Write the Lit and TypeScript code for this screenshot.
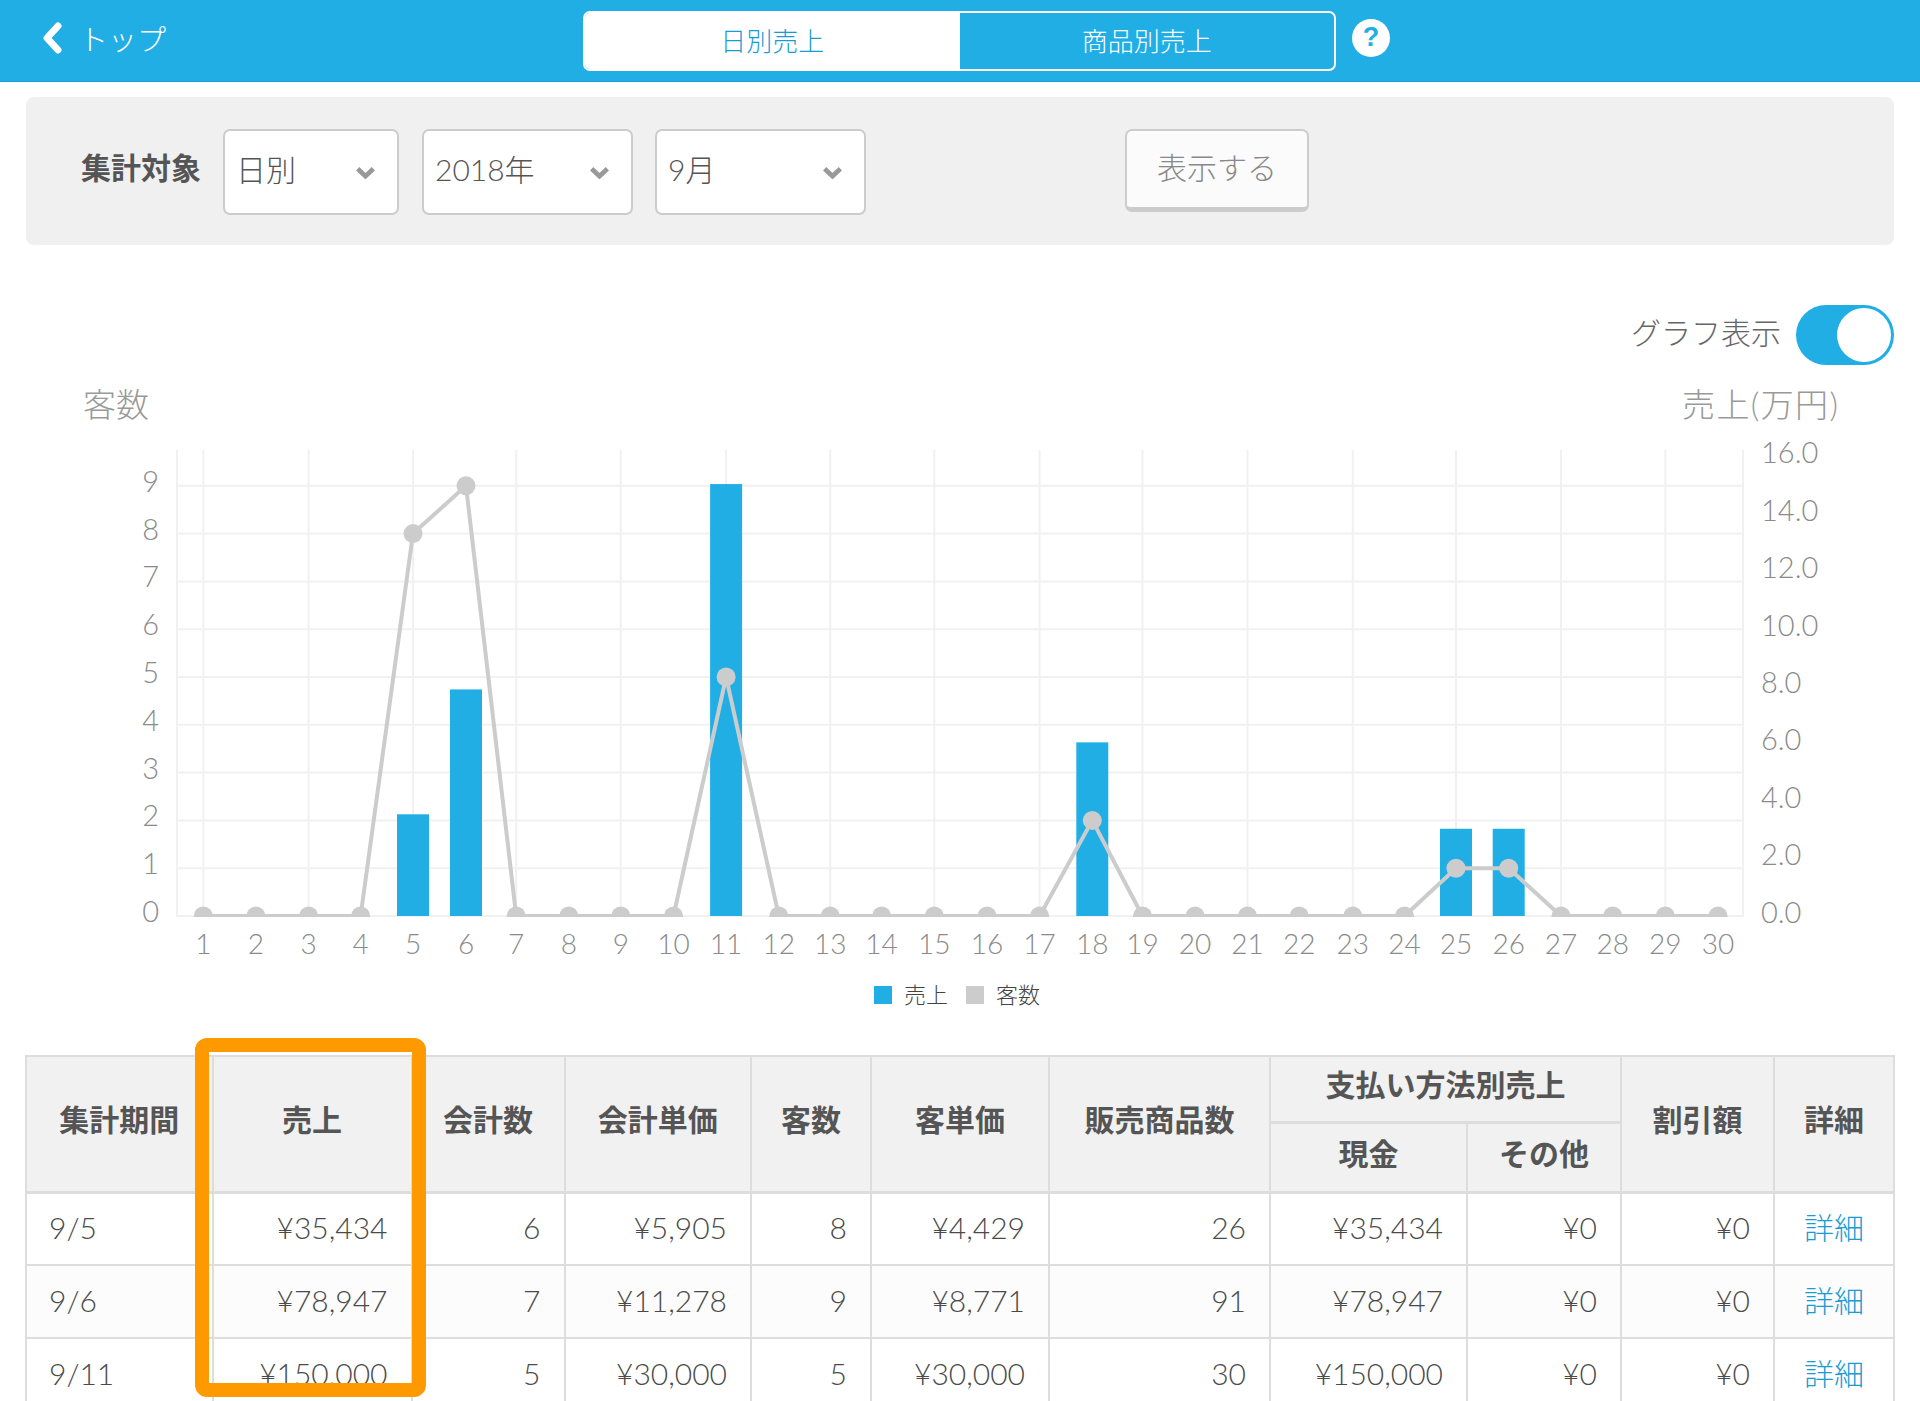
import { LitElement, html, css, svg } from "lit";
import { customElement } from "lit/decorators.js";

const Y0 = 916;
const UNIT = 47.8;
const SALES_UNIT = 28.7;
const dayXs = [
  203.3, 255.9, 308.6, 360.6, 413, 466, 516.2, 568.8, 620.8, 673.5, 726.1, 778.8, 830.2, 881.6, 934.3, 987, 1039.6, 1092.3,
  1142.5, 1195.1, 1247.5, 1299.2, 1352.8, 1404.5, 1456, 1508.7, 1561, 1612.7, 1665.3, 1718,
];
const dayX = (d: number) => dayXs[d - 1];
const days = Array.from({ length: 30 }, (_, i) => i + 1);
const counts: Record<number, number> = { 5: 8, 6: 9, 11: 5, 18: 2, 25: 1, 26: 1 };
const sales: Record<number, number> = { 5: 3.5434, 6: 7.8947, 11: 15.05, 18: 6.05, 25: 3.04, 26: 3.04 };

const rows = [
  ["9/5", "¥35,434", "6", "¥5,905", "8", "¥4,429", "26", "¥35,434", "¥0", "¥0"],
  ["9/6", "¥78,947", "7", "¥11,278", "9", "¥8,771", "91", "¥78,947", "¥0", "¥0"],
  ["9/11", "¥150,000", "5", "¥30,000", "5", "¥30,000", "30", "¥150,000", "¥0", "¥0"],
];
const colWidths = [186.5, 199, 153, 186.5, 120, 178, 221, 197, 154, 153, 120];

const chevron = html`<svg class="chev" viewBox="0 0 20 12"><polyline points="2.5,2.5 10,9.5 17.5,2.5"></polyline></svg>`;

@customElement("app-root")
export class AppRoot extends LitElement {
  static styles = css`
    :host {
      display: block;
      position: relative;
      width: 1920px;
      height: 1401px;
      overflow: hidden;
      background: #fff;
      color: #555;
      font-family: Lato, "Noto Sans CJK JP", sans-serif;
      font-weight: 300;
    }
    .header {
      height: 81px;
      background: #20aee5;
      border-bottom: 1px solid #1a9fd8;
      display: flex;
      align-items: center;
      position: relative;
    }
    .back {
      display: flex;
      align-items: center;
      gap: 15px;
      margin: -5px 0 0 42px;
      color: #fff;
      font-size: 29px;
      width: 500px;
    }
    .back svg { width: 22px; height: 32px; }
    .back polyline { fill: none; stroke: #fff; stroke-width: 7; stroke-linecap: round; stroke-linejoin: round; }
    .tabs {
      margin-left: 41px;
      width: 753px;
      height: 60px;
      box-sizing: border-box;
      border: 2px solid #fff;
      border-radius: 7px;
      display: flex;
      overflow: hidden;
      font-size: 26px;
    }
    .tab { flex: 1; display: flex; align-items: center; justify-content: center; color: #fff; padding-bottom: 3px; }
    .tab.active { background: #fff; color: #1a9bd3; }
    .help {
      width: 38px;
      height: 38px;
      margin-left: 16px;
      margin-top: -6px;
      border-radius: 50%;
      background: #fff;
      color: #20aee5;
      display: flex;
      align-items: center;
      justify-content: center;
      font: 700 27px "Liberation Sans", sans-serif;
    }
    .panel {
      margin: 15px 26px 0;
      height: 148px;
      box-sizing: border-box;
      padding: 32px 0 0 55px;
      background: #f0f0f0;
      border-radius: 8px;
      display: flex;
      align-items: flex-start;
    }
    .panel-label {
      font-size: 30px;
      font-weight: 700;
      width: 120px;
      margin: 16px 22px 0 0;
      line-height: 44px;
      white-space: nowrap;
    }
    .select {
      height: 86px;
      box-sizing: border-box;
      background: #fff;
      border: 2px solid #ccc;
      border-radius: 7px;
      margin-right: 23px;
      padding: 0 21px 0 11px;
      display: flex;
      align-items: center;
      justify-content: space-between;
      font-size: 30px;
      color: #555;
    }
    .select span { padding-bottom: 9px; }
    .select.w1 { width: 176px; }
    .select.w2 { width: 211px; margin-right: 22px; }
    .chev { width: 21px; height: 13px; }
    .chev polyline { fill: none; stroke: #999; stroke-width: 4.5; }
    .btn {
      margin-left: 237px;
      width: 184px;
      height: 83px;
      box-sizing: border-box;
      border: 2px solid #ccc;
      border-bottom-width: 5px;
      border-radius: 7px;
      background: #fbfbfb;
      color: #888;
      font-size: 30px;
      padding-bottom: 7px;
      display: flex;
      align-items: center;
      justify-content: center;
    }
    .toggle-row {
      margin-top: 60px;
      height: 60px;
      padding-right: 26px;
      display: flex;
      justify-content: flex-end;
      align-items: center;
      gap: 15px;
      font-size: 30px;
      color: #666;
    }
    .toggle-row span { padding-bottom: 9px; }
    .toggle {
      width: 98px;
      height: 60px;
      box-sizing: border-box;
      border-radius: 30px;
      background: #20aee5;
      padding: 3px;
      display: flex;
      justify-content: flex-end;
    }
    .knob { width: 54px; height: 54px; border-radius: 50%; background: #fff; }
    .chart { display: block; margin-top: 15px; width: 1920px; height: 660px; }
    .chart text { font-family: Lato, "Noto Sans CJK JP", sans-serif; font-weight: 300; fill: #8a8a8a; }
    .chart .title { font-size: 33px; fill: #999; }
    .chart .title.wide { letter-spacing: 1.4px; }
    .chart .yl { font-size: 29px; text-anchor: end; }
    .chart .yr { font-size: 29px; }
    .chart .xl { font-size: 28px; text-anchor: middle; }
    .chart .legend { font-size: 22px; fill: #444; }
    .grid { stroke: #f1f1f1; stroke-width: 2; }
    .bar { fill: #20aee5; }
    .line { fill: none; stroke: #ccc; stroke-width: 4; stroke-linejoin: round; }
    .pt { fill: #ccc; }
    table {
      margin: 15px 0 0 25px;
      width: 1868px;
      table-layout: fixed;
      border-collapse: collapse;
      font-size: 30px;
      color: #4a4a4a;
    }
    th, td { border: 2px solid #ddd; box-sizing: border-box; }
    th {
      background: #f1f1f1;
      color: #555;
      font-weight: 700;
      padding: 0 0 11px;
      text-align: center;
      height: 70px;
    }
    th[rowspan], th[colspan] { border-bottom-width: 3px; }
    th[colspan] { height: 66px; }
    thead tr:last-child th { border-bottom-width: 3px; }
    td { height: 73px; padding: 0 23px 3px; text-align: right; white-space: nowrap; }
    td.l { text-align: left; padding-left: 22px; }
    td.c { text-align: center; padding: 0 0 6px; color: #1a9bd3; }
    tbody tr:nth-child(even) td { background: #fcfcfc; }
    .highlight {
      position: absolute;
      left: 195px;
      top: 1038px;
      width: 231px;
      height: 359px;
      box-sizing: border-box;
      border: 14px solid #ff9900;
      border-radius: 12px;
      pointer-events: none;
    }
  `;

  private renderChart() {
    const pts = days.map((d) => `${dayX(d)},${Y0 - (counts[d] || 0) * UNIT}`).join(" ");
    const vLines = [177, ...days.filter((d) => d % 2 === 1).map(dayX), 1743];
    return html`<svg class="chart" viewBox="0 380 1920 660">
      <defs><clipPath id="plot"><rect x="150" y="440" width="1620" height="477"></rect></clipPath></defs>
      <text class="title" x="83" y="417">客数</text>
      <text class="title wide" x="1682" y="417">売上(万円)</text>
      ${vLines.map((x) => svg`<line class="grid" x1=${x} x2=${x} y1="450" y2="917"></line>`)}
      ${Array.from({ length: 10 }, (_, k) => svg`<line class="grid" x1="177" x2="1743" y1=${Y0 - k * UNIT} y2=${Y0 - k * UNIT}></line>`)}
      ${Array.from({ length: 10 }, (_, k) => svg`<text class="yl" x="159" y=${Y0 + 6 - k * UNIT}>${k}</text>`)}
      ${Array.from({ length: 9 }, (_, k) => svg`<text class="yr" x="1761" y=${922.5 - k * 57.4}>${(k * 2).toFixed(1)}</text>`)}
      ${days.map((d) => svg`<text class="xl" x=${dayX(d)} y="954">${d}</text>`)}
      ${days
        .filter((d) => sales[d])
        .map((d) => {
          const h = sales[d] * SALES_UNIT;
          return svg`<rect class="bar" x=${dayX(d) - 16} y=${Y0 - h} width="32" height=${h}></rect>`;
        })}
      <g clip-path="url(#plot)">
        <polyline class="line" points=${pts}></polyline>
        ${days.map((d) => svg`<circle class="pt" cx=${dayX(d)} cy=${Y0 - (counts[d] || 0) * UNIT} r="9.5"></circle>`)}
      </g>
      <rect class="bar" x="874" y="986" width="18" height="18"></rect>
      <text class="legend" x="904" y="1002.5">売上</text>
      <rect class="pt" x="966" y="986" width="18" height="18"></rect>
      <text class="legend" x="996" y="1002.5">客数</text>
    </svg>`;
  }

  render() {
    return html`
      <div class="header">
        <div class="back">
          <svg viewBox="0 0 22 32"><polyline points="16,4 5,16 16,28"></polyline></svg>
          <span>トップ</span>
        </div>
        <div class="tabs">
          <div class="tab active">日別売上</div>
          <div class="tab">商品別売上</div>
        </div>
        <div class="help">?</div>
      </div>
      <div class="panel">
        <div class="panel-label">集計対象</div>
        <div class="select w1"><span>日別</span>${chevron}</div>
        <div class="select w2"><span>2018年</span>${chevron}</div>
        <div class="select w2"><span>9月</span>${chevron}</div>
        <div class="btn">表示する</div>
      </div>
      <div class="toggle-row">
        <span>グラフ表示</span>
        <div class="toggle"><div class="knob"></div></div>
      </div>
      ${this.renderChart()}
      <table>
        <colgroup>
          ${colWidths.map((w) => html`<col style="width:${w}px" />`)}
        </colgroup>
        <thead>
          <tr>
            <th rowspan="2">集計期間</th>
            <th rowspan="2">売上</th>
            <th rowspan="2">会計数</th>
            <th rowspan="2">会計単価</th>
            <th rowspan="2">客数</th>
            <th rowspan="2">客単価</th>
            <th rowspan="2">販売商品数</th>
            <th colspan="2">支払い方法別売上</th>
            <th rowspan="2">割引額</th>
            <th rowspan="2">詳細</th>
          </tr>
          <tr>
            <th>現金</th>
            <th>その他</th>
          </tr>
        </thead>
        <tbody>
          ${rows.map(
            (r) => html`<tr>
              ${r.map((c, i) => html`<td class=${i === 0 ? "l" : ""}>${c}</td>`)}
              <td class="c">詳細</td>
            </tr>`
          )}
        </tbody>
      </table>
      <div class="highlight"></div>
    `;
  }
}
